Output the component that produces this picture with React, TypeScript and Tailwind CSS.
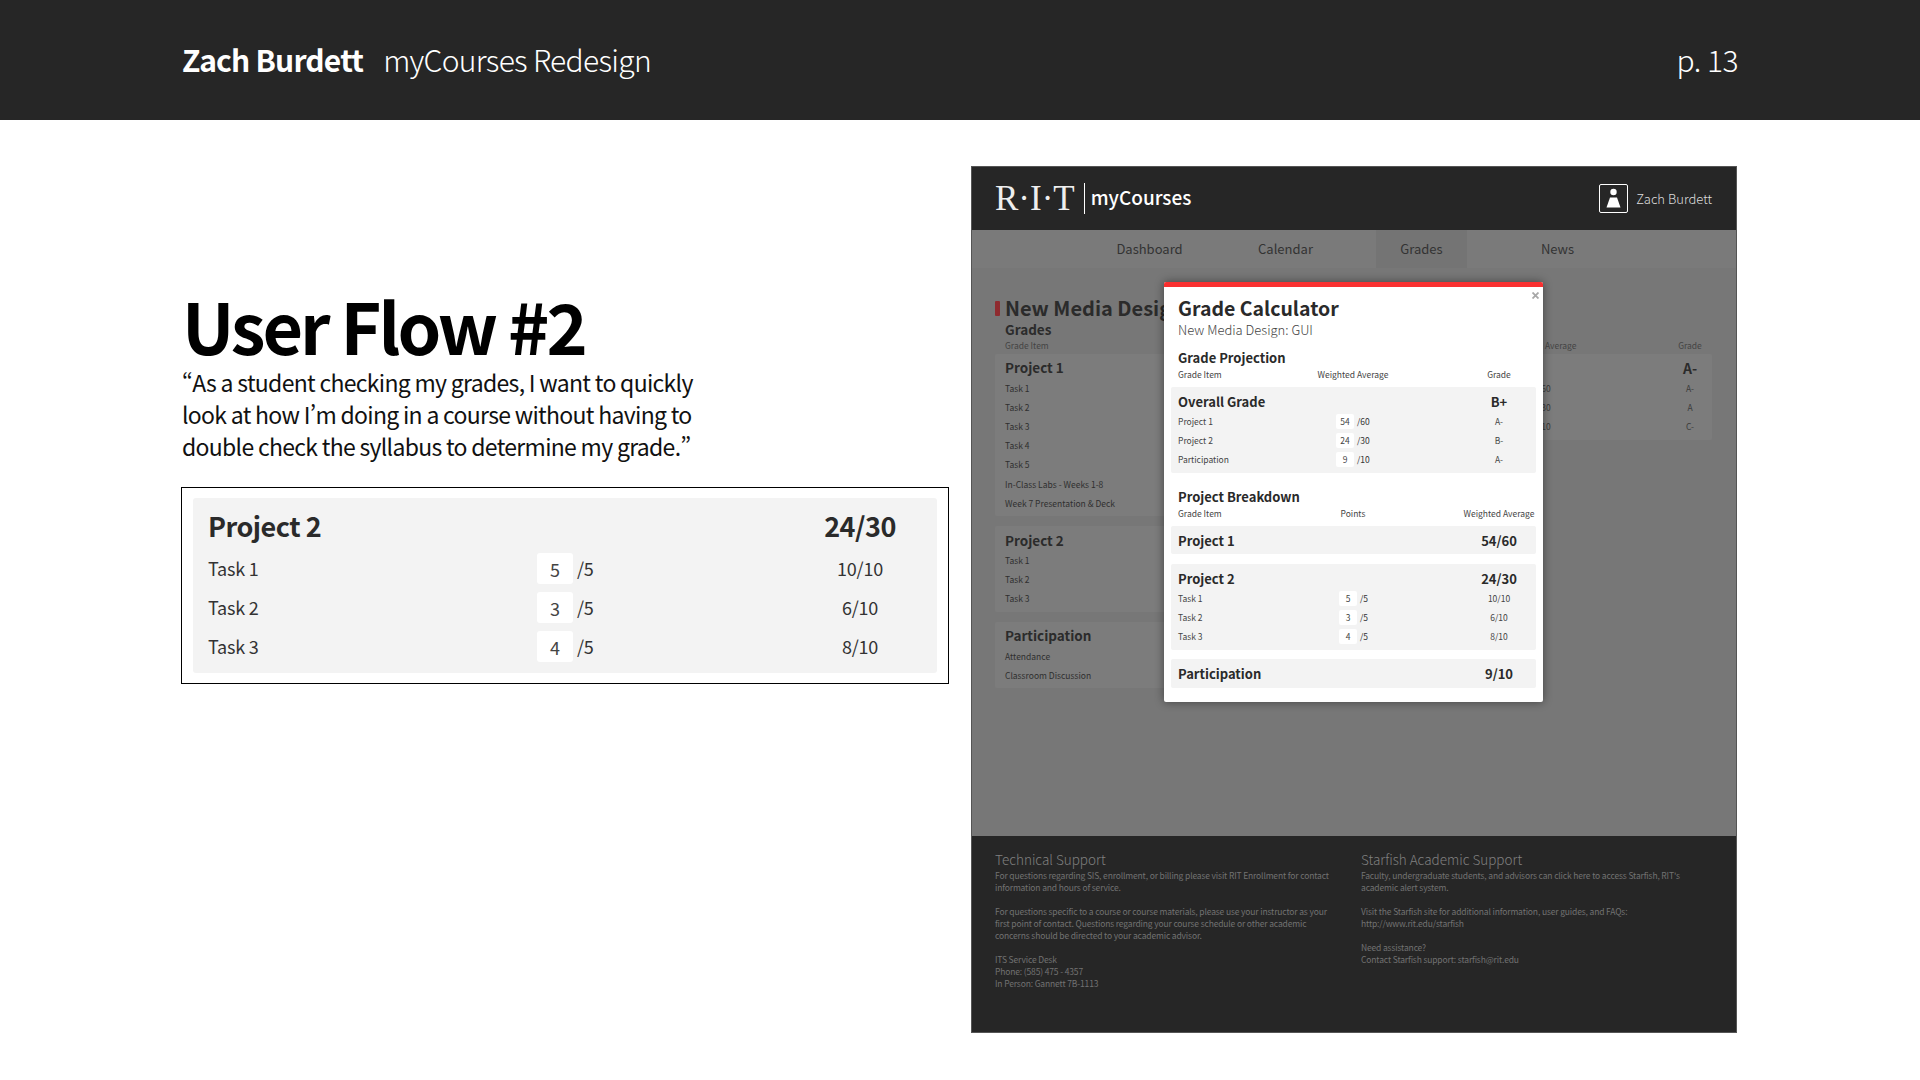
import React from "react";

interface RowProps {
  label: string;
  value?: string;
  max?: string;
  grade?: string;
  shift?: boolean;
}

const grid = "grid grid-cols-[122px_106px_56px_74px] items-center";
const bgGrid = "grid grid-cols-[119px_106px_78px_44px] items-center";

const SmallInput = ({ value, max, shift }: { value: string; max: string; shift?: boolean }) => (
  <div className={`flex items-center justify-center gap-[3px] ${shift ? "pl-[7px]" : "pl-[1px]"}`}>
    <span className="flex h-[15px] w-[18px] items-center justify-center rounded-[2px] bg-white text-[8.5px] text-[#444]">
      {value}
    </span>
    <span className="w-[14px] text-[8.5px] text-[#333]">{max}</span>
  </div>
);

const ModalRow = ({ label, value, max, grade, shift }: RowProps) => (
  <div className={`${grid} h-[19px] text-[8.5px] text-[#444]`}>
    <span>{label}</span>
    {value && max ? <SmallInput value={value} max={max} shift={shift} /> : <span />}
    <span />
    <span className="text-center">{grade}</span>
  </div>
);

const ModalTitleRow = ({ label, right }: { label: string; right?: string }) => (
  <div className={`${grid} h-[21px] text-[13px] font-bold text-[#2a2a2a]`}>
    <span className="col-span-2">{label}</span>
    <span />
    <span className="text-center">{right}</span>
  </div>
);

const ModalHeader = ({ title, mid, right }: { title: string; mid: string; right: string }) => (
  <div>
    <div className="flex h-[18px] items-center pl-[14px] text-[13px] font-bold text-[#2a2a2a]">{title}</div>
    <div className={`${grid} h-[16px] pb-[2px] pl-[14px] text-[8.5px] text-[#444]`}>
      <span>{"Grade Item"}</span>
      <span className="text-center whitespace-nowrap">{mid}</span>
      <span />
      <span className="text-center whitespace-nowrap">{right}</span>
    </div>
  </div>
);

const BgCard = ({ title, rows, className }: { title: string; rows: string[]; className?: string }) => (
  <div className={`rounded-[2px] bg-[#7c7c7c] pt-[4px] pb-[3px] pl-[10px] ${className ?? ""}`}>
    <div className="flex h-[21px] items-center pb-[2px] text-[13.5px] font-bold text-[#2b2b2b]">{title}</div>
    {rows.map((row) => (
      <div key={row} className="flex h-[19.2px] items-center pb-[1px] text-[8.5px] text-[#2f2f2f]">
        {row}
      </div>
    ))}
  </div>
);

const BgGradeRow = ({ max, grade }: { max: string; grade: string }) => (
  <div className={`${bgGrid} h-[19px] text-[8.5px] text-[#3a3a3a]`}>
    <span />
    <span className="pl-[54px]">{max}</span>
    <span />
    <span className="text-center">{grade}</span>
  </div>
);

const FlowRow = ({ label, value, grade }: { label: string; value: string; grade: string }) => (
  <div className="grid h-[39px] grid-cols-[329px_253px_140px] items-center text-[18px] tracking-[-0.2px] text-[#333]">
    <span>{label}</span>
    <div className="flex items-center gap-[4px]">
      <span className="flex h-[31px] w-[36px] items-center justify-center rounded-[3px] bg-white pt-[1px] text-[#444]">
        {value}
      </span>
      <span>/5</span>
    </div>
    <span className="text-center">{grade}</span>
  </div>
);

export default function App() {
  return (
    <div className="h-[1080px] w-[1920px] overflow-hidden bg-white [font-family:'Noto_Sans_CJK_SC','Open_Sans',sans-serif]">
      <header className="flex h-[120px] items-center justify-between bg-[#262626] pr-[182px] pb-[2px] pl-[182px] text-white">
        <div className="flex items-center gap-[20px]">
          <span className="text-[30px] font-bold tracking-[-0.8px]">Zach Burdett</span>
          <span className="text-[30px] font-light tracking-[-0.7px]">myCourses Redesign</span>
        </div>
        <span className="text-[30px] font-light tracking-[-0.5px]">p. 13</span>
      </header>

      <main className="flex pt-[46px] pl-[181px]">
        {/* left column */}
        <section className="mr-[22px] w-[768px] pt-[118px]">
          <h1 className="flex h-[80px] items-center pl-[1px] text-[70px] font-bold tracking-[-3px] text-black">
            User Flow #2
          </h1>
          <p className="mt-[2px] pl-[1px] text-[23px] leading-[32px] tracking-[-0.7px] text-[#111] [font-feature-settings:'pwid']">
            “As a student checking my grades, I want to quickly
            <br />
            look at how I’m doing in a course without having to
            <br />
            double check the syllabus to determine my grade.”
          </p>
          <div className="mt-[25px] h-[197px] border-[1.5px] border-black pt-[10px] pl-[11px]">
            <div className="h-[175px] w-[744px] rounded-[3px] bg-[#f3f3f3] pt-[8px] pl-[15px]">
              <div className="grid h-[43px] grid-cols-[582px_140px] items-center pb-[4px] text-[27px] font-bold tracking-[-0.5px] text-[#2a2a2a]">
                <span>Project 2</span>
                <span className="text-center">24/30</span>
              </div>
              <FlowRow label="Task 1" value="5" grade="10/10" />
              <FlowRow label="Task 2" value="3" grade="6/10" />
              <FlowRow label="Task 3" value="4" grade="8/10" />
            </div>
          </div>
        </section>

        {/* site mockup */}
        <section className="flex h-[867px] w-[766px] flex-col border border-[#555] bg-[#777]">
          <div className="flex h-[63px] items-center justify-between bg-[#262626] pr-[24px] pl-[23px]">
            <div className="flex items-center">
              <span className="text-[35px] leading-[40px] text-[#eee] [font-family:'Liberation_Serif',serif]">
                R·I·T
              </span>
              <span className="mr-[6px] ml-[9px] h-[31px] w-px bg-white" />
              <span className="pb-[3px] text-[19px] font-medium text-white">myCourses</span>
            </div>
            <div className="flex items-center gap-[8px]">
              <span className="flex h-[29px] w-[29px] items-center justify-center rounded-[2px] border border-white">
                <svg width="17" height="21" viewBox="0 0 17 21" fill="white">
                  <circle cx="8.5" cy="4" r="3.2" />
                  <path d="M5 9.5h7L15.5 19.5h-14z" />
                </svg>
              </span>
              <span className="text-[13px] font-light text-[#ddd]">Zach Burdett</span>
            </div>
          </div>

          <nav className="flex h-[38px] justify-center bg-[#7a7a7a] pr-[1px] text-[13px] text-[#333]">
            <span className="flex w-[136px] items-center justify-center pb-[1px]">Dashboard</span>
            <span className="flex w-[136px] items-center justify-center pb-[1px]">Calendar</span>
            <span className="flex w-[136px] justify-center">
              <span className="flex w-[91px] items-center justify-center bg-[#747474] pb-[1px]">Grades</span>
            </span>
            <span className="flex w-[136px] items-center justify-center pb-[1px]">News</span>
          </nav>

          <div className="relative flex-1 bg-[#777] pt-[26px] pl-[23px]">
            <div className="flex h-[28px] items-center">
              <span className="mr-[5px] h-[15px] w-[5px] rounded-[1px] bg-[#8f2b2f]" />
              <span className="text-[20px] font-bold text-[#2b2b2b]">New Media Design: GUI</span>
            </div>
            <div className="flex">
              <div className="w-[350px]">
                <div className="flex h-[16px] items-center pb-[1px] pl-[10px] text-[13.5px] font-bold text-[#2b2b2b]">
                  Grades
                </div>
                <div className="flex h-[16px] items-center pb-[2px] pl-[10px] text-[8.5px] text-[#444]">Grade Item</div>
                <BgCard
                  title="Project 1"
                  rows={["Task 1", "Task 2", "Task 3", "Task 4", "Task 5", "In-Class Labs - Weeks 1-8", "Week 7 Presentation & Deck"]}
                />
                <BgCard title="Project 2" rows={["Task 1", "Task 2", "Task 3"]} className="mt-[10px]" />
                <BgCard title="Participation" rows={["Attendance", "Classroom Discussion"]} className="mt-[10px]" />
              </div>
              <div className="ml-[20px] w-[347px] pt-[16px]">
                <div className={`${bgGrid} h-[16px] pb-[2px] text-[8.5px] text-[#444]`}>
                  <span />
                  <span className="pl-[8px] text-center whitespace-nowrap">Weighted Average</span>
                  <span />
                  <span className="text-center">Grade</span>
                </div>
                <div className="rounded-[2px] bg-[#7c7c7c] pt-[4px] pb-[4px]">
                  <div className={`${bgGrid} h-[21px] text-[14px] font-bold text-[#2b2b2b]`}>
                    <span />
                    <span />
                    <span />
                    <span className="text-center">A-</span>
                  </div>
                  <BgGradeRow max="/60" grade="A-" />
                  <BgGradeRow max="/30" grade="A" />
                  <BgGradeRow max="/10" grade="C-" />
                </div>
              </div>
            </div>

            {/* grade calculator modal */}
            <div className="absolute top-[14px] left-[192px] h-[420px] w-[379px] rounded-[2px] bg-white shadow-[0_0_10px_rgba(0,0,0,0.45)]">
              <div className="h-[5px] rounded-t-[2px] bg-[#f93030]" />
              <svg
                className="absolute top-[10px] right-[4px]"
                width="7"
                height="7"
                viewBox="0 0 7 7"
                stroke="#a8a8a8"
                strokeWidth="1.8"
              >
                <path d="M0.5 0.5l6 6M6.5 0.5l-6 6" />
              </svg>
              <div className="mt-[9px] flex h-[24px] items-center pl-[14px] text-[19.5px] font-bold text-[#2a2a2a]">
                Grade Calculator
              </div>
              <div className="flex h-[20px] items-center pl-[14px] text-[13px] font-light text-[#444]">
                New Media Design: GUI
              </div>
              <div className="mt-[9px]">
                <ModalHeader title="Grade Projection" mid="Weighted Average" right="Grade" />
              </div>
              <div className="mx-[7px] mt-[4px] h-[86px] rounded-[2px] bg-[#f3f3f3] pt-[4px] pl-[7px]">
                <ModalTitleRow label="Overall Grade" right="B+" />
                <ModalRow label="Project 1" value="54" max="/60" grade="A-" />
                <ModalRow label="Project 2" value="24" max="/30" grade="B-" />
                <ModalRow label="Participation" value="9" max="/10" grade="A-" />
              </div>
              <div className="mt-[15px]">
                <ModalHeader title="Project Breakdown" mid="Points" right="Weighted Average" />
              </div>
              <div className="mx-[7px] mt-[4px] h-[28px] rounded-[2px] bg-[#f3f3f3] pt-[4px] pl-[7px]">
                <ModalTitleRow label="Project 1" right="54/60" />
              </div>
              <div className="mx-[7px] mt-[10px] h-[86px] rounded-[2px] bg-[#f3f3f3] pt-[4px] pl-[7px]">
                <ModalTitleRow label="Project 2" right="24/30" />
                <ModalRow label="Task 1" value="5" max="/5" grade="10/10" shift />
                <ModalRow label="Task 2" value="3" max="/5" grade="6/10" shift />
                <ModalRow label="Task 3" value="4" max="/5" grade="8/10" shift />
              </div>
              <div className="mx-[7px] mt-[9px] h-[29px] rounded-[2px] bg-[#f3f3f3] pt-[4px] pl-[7px]">
                <ModalTitleRow label="Participation" right="9/10" />
              </div>
            </div>
          </div>

          <footer className="grid h-[196px] grid-cols-[366px_1fr] bg-[#262626] pt-[14px] pl-[23px] text-[8.5px] leading-[12px] tracking-[-0.15px] text-[#727272]">
            <div className="w-[345px]">
              <div className="mb-[1px] flex h-[18px] items-center text-[13.5px] font-light tracking-normal text-[#808080]">
                Technical Support
              </div>
              <p>
                For questions regarding SIS, enrollment, or billing please visit RIT Enrollment for contact information
                and hours of service.
              </p>
              <p className="mt-[12px]">
                For questions specific to a course or course materials, please use your instructor as your first point
                of contact. Questions regarding your course schedule or other academic concerns should be directed to
                your academic advisor.
              </p>
              <p className="mt-[12px]">
                ITS Service Desk
                <br />
                Phone: (585) 475 - 4357
                <br />
                In Person: Gannett 7B-1113
              </p>
            </div>
            <div className="w-[345px]">
              <div className="mb-[1px] flex h-[18px] items-center text-[13.5px] font-light tracking-normal text-[#808080]">
                Starfish Academic Support
              </div>
              <p>
                Faculty, undergraduate students, and advisors can click here to access Starfish, RIT's academic alert
                system.
              </p>
              <p className="mt-[12px]">
                Visit the Starfish site for additional information, user guides, and FAQs:
                <br />
                http://www.rit.edu/starfish
              </p>
              <p className="mt-[12px]">
                Need assistance?
                <br />
                Contact Starfish support: starfish@rit.edu
              </p>
            </div>
          </footer>
        </section>
      </main>
    </div>
  );
}
